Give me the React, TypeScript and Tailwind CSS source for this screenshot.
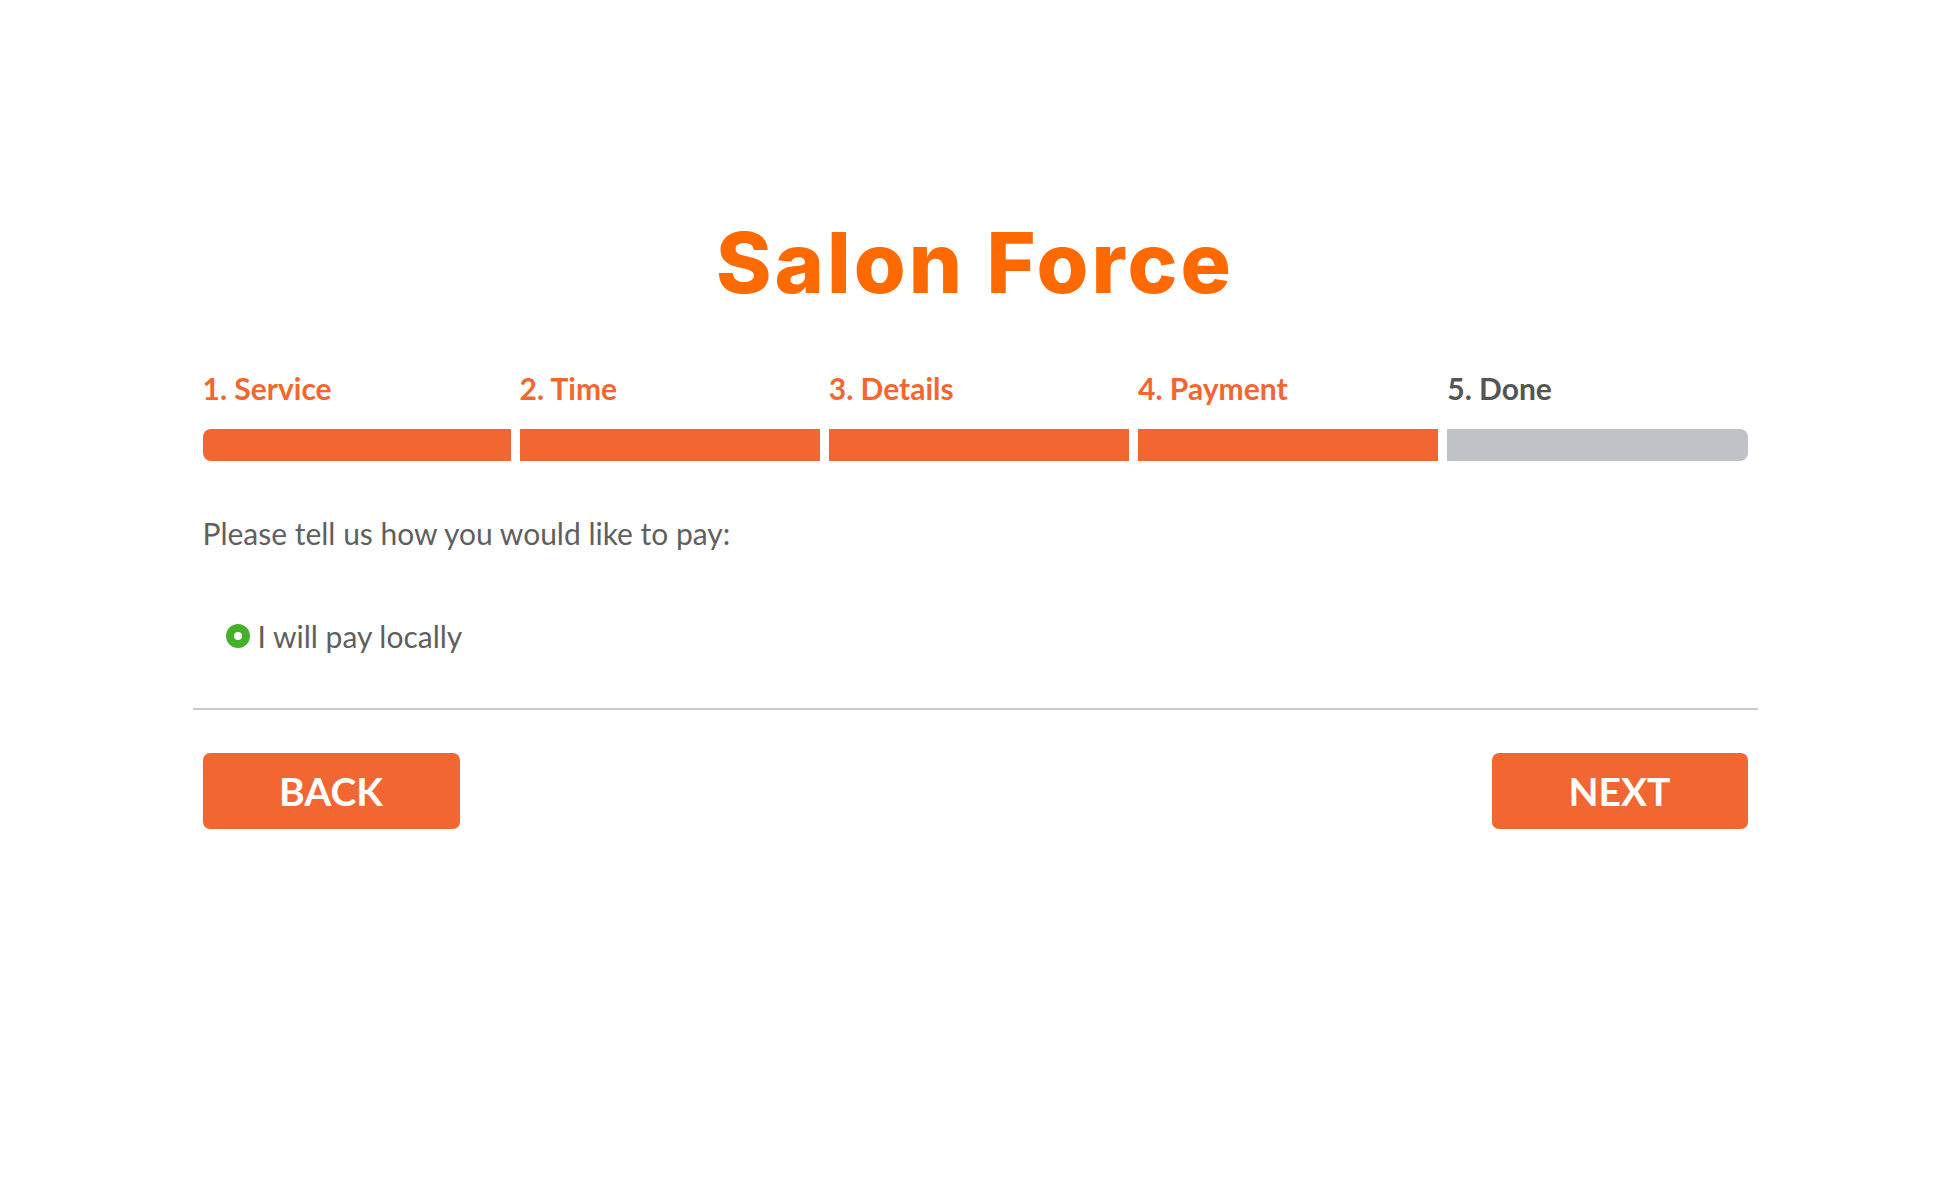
const steps = [
  { label: "1. Service", done: true },
  { label: "2. Time", done: true },
  { label: "3. Details", done: true },
  { label: "4. Payment", done: true },
  { label: "5. Done", done: false },
];

export default function App() {
  return (
    <div className="min-h-screen bg-white font-['Lato',sans-serif]">
      <div className="mx-auto w-[1565px] pt-[221px]">
        <h1 className="text-center font-['Inter',sans-serif] text-[84px] font-extrabold leading-none tracking-[3px] text-[#ff6a00]">
          Salon Force
        </h1>

        <div className="px-[10px]">
          <div className="mt-[68px] flex gap-[9px]">
            {steps.map((step, i) => (
              <div
                key={step.label}
                className={i === 0 ? "w-[308px] shrink-0" : "flex-1"}
              >
                <p
                  className={`text-[30px] font-bold leading-none ${
                    step.done ? "text-[#f26731]" : "text-[#555555]"
                  }`}
                >
                  {step.label}
                </p>
                <div
                  className={`mt-[26px] h-[32px] ${
                    step.done ? "bg-[#f26731]" : "bg-[#bfc3c7]"
                  } ${i === 0 ? "rounded-l-[8px]" : ""} ${
                    i === steps.length - 1 ? "rounded-r-[8px]" : ""
                  }`}
                />
              </div>
            ))}
          </div>

          <p className="mt-[57px] text-[30px] leading-none text-[#5f5f5f]">
            Please tell us how you would like to pay:
          </p>

          <label className="mt-[73px] ml-[23px] flex items-center gap-[8px] text-[30px] leading-none text-[#5f5f5f]">
            <span className="flex size-[24px] items-center justify-center rounded-full bg-[#45b02c]">
              <span className="size-[8px] rounded-full bg-white" />
            </span>
            I will pay locally
          </label>
        </div>

        <div className="mt-[57px] h-[2px] bg-[#c9c9c9]" />

        <div className="mt-[43px] flex justify-between px-[10px]">
          <button
            type="button"
            className="h-[76px] w-[257px] rounded-[7px] bg-[#f26731] text-[39px] font-bold text-white"
          >
            BACK
          </button>
          <button
            type="button"
            className="h-[76px] w-[256px] rounded-[7px] bg-[#f26731] text-[39px] font-bold text-white"
          >
            NEXT
          </button>
        </div>
      </div>
    </div>
  );
}
